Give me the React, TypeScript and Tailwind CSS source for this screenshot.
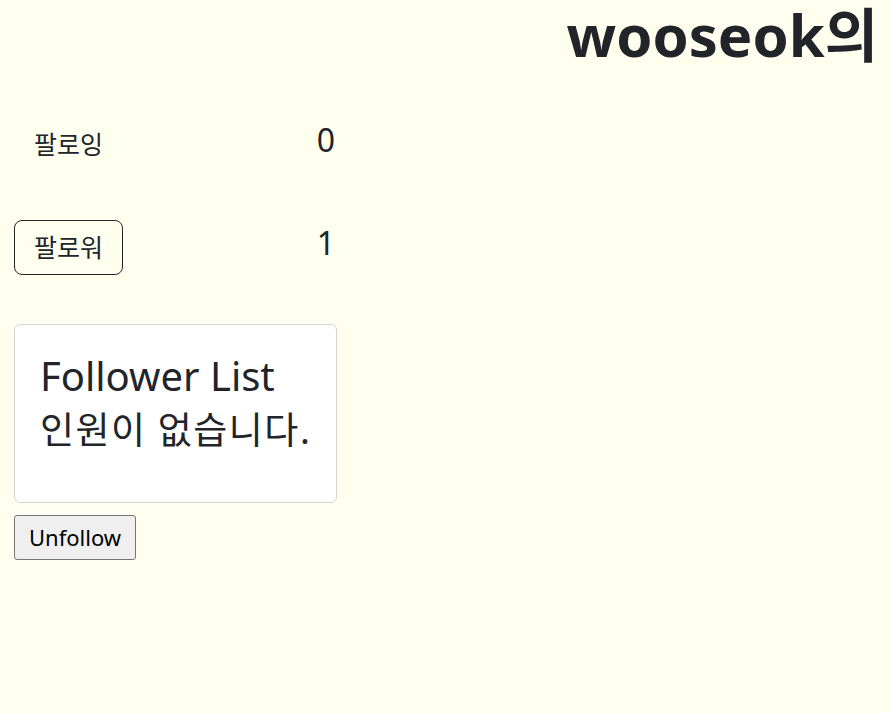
import React from "react";

const font = {
  fontFamily: '"Noto Sans", "Noto Sans CJK KR", sans-serif',
};

const CountRow: React.FC<{ label: string; count: number; bordered?: boolean }> = ({
  label,
  count,
  bordered,
}) => (
  <div className="flex items-center justify-between">
    <button
      className={`w-[109px] h-[55px] rounded-[8px] border text-[25px] leading-none text-[#212529] ${
        bordered ? "border-[#212529]" : "border-transparent"
      }`}
    >
      {label}
    </button>
    <span className="text-[32px] leading-none text-[#212529] -mt-[8px] pr-[2px]">{count}</span>
  </div>
);

export default function App() {
  return (
    <div className="min-h-screen bg-[#fffff0] text-[#212529]" style={font}>
      <h1 className="text-right text-[58px] font-bold leading-[1.2] pr-[12px]">wooseok의</h1>
      <div className="ml-[14px] w-[323px] flex flex-col">
        <div className="mt-[47px]">
          <CountRow label="팔로잉" count={0} />
        </div>
        <div className="mt-[48px]">
          <CountRow label="팔로워" count={1} bordered />
        </div>
        <div className="mt-[49px] h-[179px] bg-white border border-[#d6d6cf] rounded-[6px] px-[25px] pt-[25px]">
          <div className="text-[40px] leading-[1.3] whitespace-nowrap">Follower List</div>
          <div className="text-[37px] leading-[1.5] whitespace-nowrap tracking-[1.5px]">인원이 없습니다.</div>
        </div>
        <div className="mt-[12px]">
          <button className="h-[45px] px-[14px] bg-[#efefef] border border-[#767676] rounded-[3px] text-[22px] leading-none text-black">
            Unfollow
          </button>
        </div>
      </div>
    </div>
  );
}
